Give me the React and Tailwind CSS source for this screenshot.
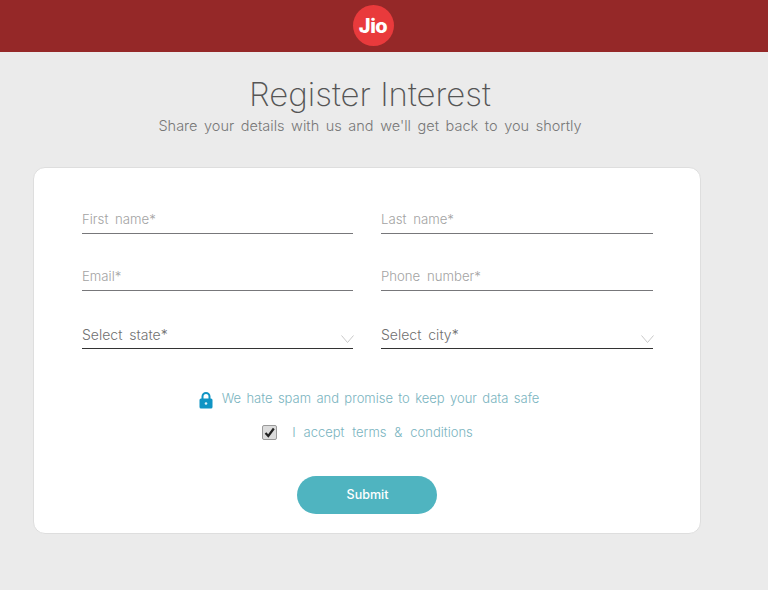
import React from 'react';

const FONT = "font-['Inter','Liberation_Sans',sans-serif]";

function TextField({ label }) {
  return (
    <div className="h-[57px] flex flex-col justify-end">
      <div className="h-[30px] border-b border-[#77777a] text-[13.2px] font-light leading-[31px] text-[#a3a3a3] [word-spacing:3px]">
        {label}
      </div>
    </div>
  );
}

function SelectField({ label }) {
  return (
    <div className="h-[58px] flex flex-col justify-end">
      <div className="h-[30px] pt-[2px] border-b border-[#333333] flex items-center justify-between text-[14px] font-light text-[#707070] [word-spacing:3px]">
        <span>{label}</span>
        <svg width="13" height="9" viewBox="0 0 13 9" className="mt-[9px] mr-[-1px]">
          <path d="M0.5 0.5L6.5 7.5L12.5 0.5" fill="none" stroke="#c9c9c9" strokeWidth="1" />
        </svg>
      </div>
    </div>
  );
}

export default function App() {
  return (
    <div className={`min-h-[590px] bg-[#ebebeb] overflow-hidden ${FONT}`}>
      <header className="h-[52px] bg-[#952828] flex justify-center pt-[5px]">
        <div className="ml-[-22px] w-[41px] h-[41px] rounded-full bg-[#e93a3c] flex items-center justify-center text-white text-[20px] font-extrabold tracking-[-0.5px]">
          Jio
        </div>
      </header>

      <div className="text-center pl-[4px] pr-[32px]">
        <h1 className="mt-[20px] text-[33px] leading-[44px] font-extralight text-[#555555]">Register Interest</h1>
        <p className="text-[14.5px] leading-[20px] font-light text-[#777777] [word-spacing:2.5px]">
          Share your details with us and we'll get back to you shortly
        </p>
      </div>

      <div className="ml-[33px] mt-[31px] w-[668px] h-[367px] bg-white rounded-xl border border-[#dedede] pl-[48px] pr-[47px] pt-[9px]">
        <div className="w-[571px] grid grid-cols-[271px_272px] gap-x-[28px]">
          <TextField label="First name*" />
          <TextField label="Last name*" />
          <TextField label="Email*" />
          <TextField label="Phone number*" />
          <SelectField label="Select state*" />
          <SelectField label="Select city*" />
        </div>

        <div className="mt-[40px] flex items-center justify-center gap-[9px] pl-[3px] text-[13px] font-light text-[#7ab4c0] [word-spacing:1.7px]">
          <svg width="14" height="17" viewBox="0 0 14 17" className="-mb-[3px]">
            <path d="M3.5 7V4.5a3.5 3.5 0 0 1 7 0V7" fill="none" stroke="#0f94c4" strokeWidth="2" />
            <rect x="0.5" y="6.5" width="13" height="10" rx="1.5" fill="#0f94c4" />
            <circle cx="7" cy="11.5" r="1.3" fill="#dff3fa" />
          </svg>
          <span>We hate spam and promise to keep your data safe</span>
        </div>

        <div className="mt-[14px] flex items-center justify-center gap-[15px] text-[13px] font-light text-[#7ab4c0] [word-spacing:4.2px]">
          <span className="w-[15px] h-[15px] rounded-[2px] border border-[#9a9a9a] bg-[#dcdcdc] flex items-center justify-center">
            <svg width="11" height="11" viewBox="0 0 11 11">
              <path d="M1.5 6l2.8 3L9.8 1.5" fill="none" stroke="#222222" strokeWidth="2.2" />
            </svg>
          </span>
          <span>I accept terms &amp; conditions</span>
        </div>

        <div className="mt-[34px] pr-[2px] flex justify-center">
          <button className="w-[140px] h-[38px] pl-[2px] rounded-full bg-[#4fb4c0] text-white text-[12.5px] font-medium">
            Submit
          </button>
        </div>
      </div>
    </div>
  );
}
